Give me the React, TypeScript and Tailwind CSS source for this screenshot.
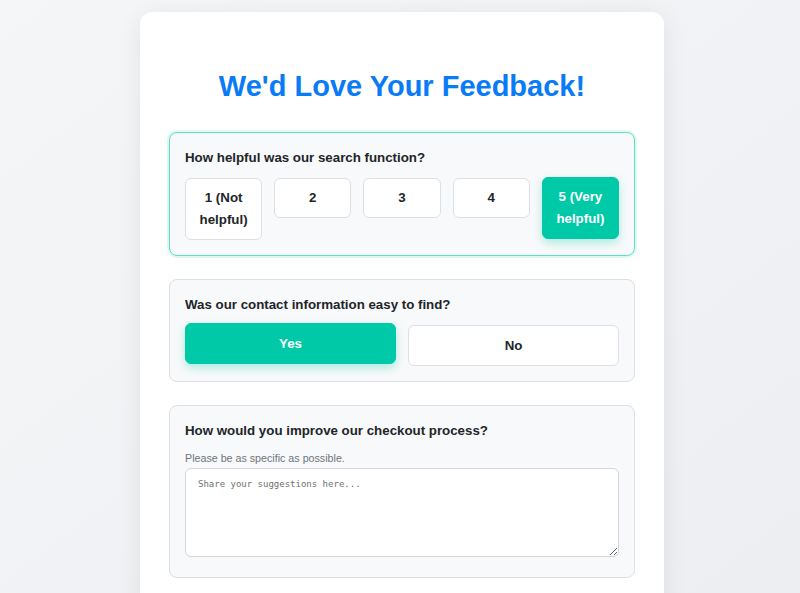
import { useState } from "react";

const ratings = ["1 (Not helpful)", "2", "3", "4", "5 (Very helpful)"];

export default function App() {
    const [rating, setRating] = useState(4);
    const [contact, setContact] = useState<"yes" | "no">("yes");

    return (
        <div className="min-h-[593px] bg-gradient-to-br from-[#f5f6f8] to-[#eceef1] pt-3 pl-1 font-['Liberation_Sans',Arial,sans-serif] text-[#212529]">
            {/* Feedback card */}
            <div className="mx-auto w-[524px] rounded-xl bg-white pl-[29px] pr-[29px] pt-[30px] pb-10 shadow-[0_4px_24px_rgba(0,0,0,0.08)]">
                <h1 className="mt-[28px] mb-[29px] text-center text-[29px] leading-[33px] font-bold text-[#0a7bf6]">
                    We'd Love Your Feedback!
                </h1>

                {/* Rating question */}
                <div className="rounded-lg border border-[#5fe0c3] bg-[#f8f9fa] p-[15px] shadow-[0_0_0_2px_rgba(0,201,167,0.12)]">
                    <p className="mb-[10px] text-[13.3px] leading-5 font-semibold">
                        How helpful was our search function?
                    </p>
                    <div className="flex items-start gap-3">
                        {ratings.map((label, i) => (
                            <button
                                key={label}
                                onClick={() => setRating(i)}
                                className={
                                    rating === i
                                        ? "flex-1 -translate-y-[1px] rounded-md border border-[#00c9a7] bg-[#00c9a7] px-2 py-2 text-[13.3px] leading-[22px] font-bold text-white shadow-[0_4px_10px_rgba(0,201,167,0.3)]"
                                        : "flex-1 rounded-md border border-[#dcdfe3] bg-white px-2 py-2 text-[13.3px] leading-[22px] font-bold text-[#212529]"
                                }
                            >
                                {label}
                            </button>
                        ))}
                    </div>
                </div>

                {/* Yes / No question */}
                <div className="mt-[23px] rounded-lg border border-[#dcdfe3] bg-[#f8f9fa] p-[15px]">
                    <p className="mb-[10px] text-[13.3px] leading-5 font-semibold">
                        Was our contact information easy to find?
                    </p>
                    <div className="flex gap-3">
                        {(["yes", "no"] as const).map((v) => (
                            <button
                                key={v}
                                onClick={() => setContact(v)}
                                className={
                                    contact === v
                                        ? "flex-1 -translate-y-[2px] rounded-md border border-[#00c9a7] bg-[#00c9a7] py-2 text-[13.3px] leading-[23px] font-bold text-white shadow-[0_4px_10px_rgba(0,201,167,0.3)]"
                                        : "flex-1 rounded-md border border-[#dcdfe3] bg-white py-2 text-[13.3px] leading-[23px] font-bold text-[#212529]"
                                }
                            >
                                {v === "yes" ? "Yes" : "No"}
                            </button>
                        ))}
                    </div>
                </div>

                {/* Open question */}
                <div className="mt-[23px] rounded-lg border border-[#dcdfe3] bg-[#f8f9fa] px-[15px] pt-[15px] pb-5">
                    <p className="mb-[10px] text-[13.3px] leading-5 font-bold">
                        How would you improve our checkout process?
                    </p>
                    <p className="mb-[3px] text-[10.7px] leading-[14px] text-[#6c757d]">
                        Please be as specific as possible.
                    </p>
                    <textarea
                        placeholder="Share your suggestions here..."
                        className="block h-[89px] w-full rounded-md border border-[#d3d6da] bg-white px-3 py-[10px] font-['DejaVu_Sans_Mono',monospace] text-[9px] leading-[11px] placeholder:text-[#6f6f6f]"
                    />
                </div>
            </div>
        </div>
    );
}
